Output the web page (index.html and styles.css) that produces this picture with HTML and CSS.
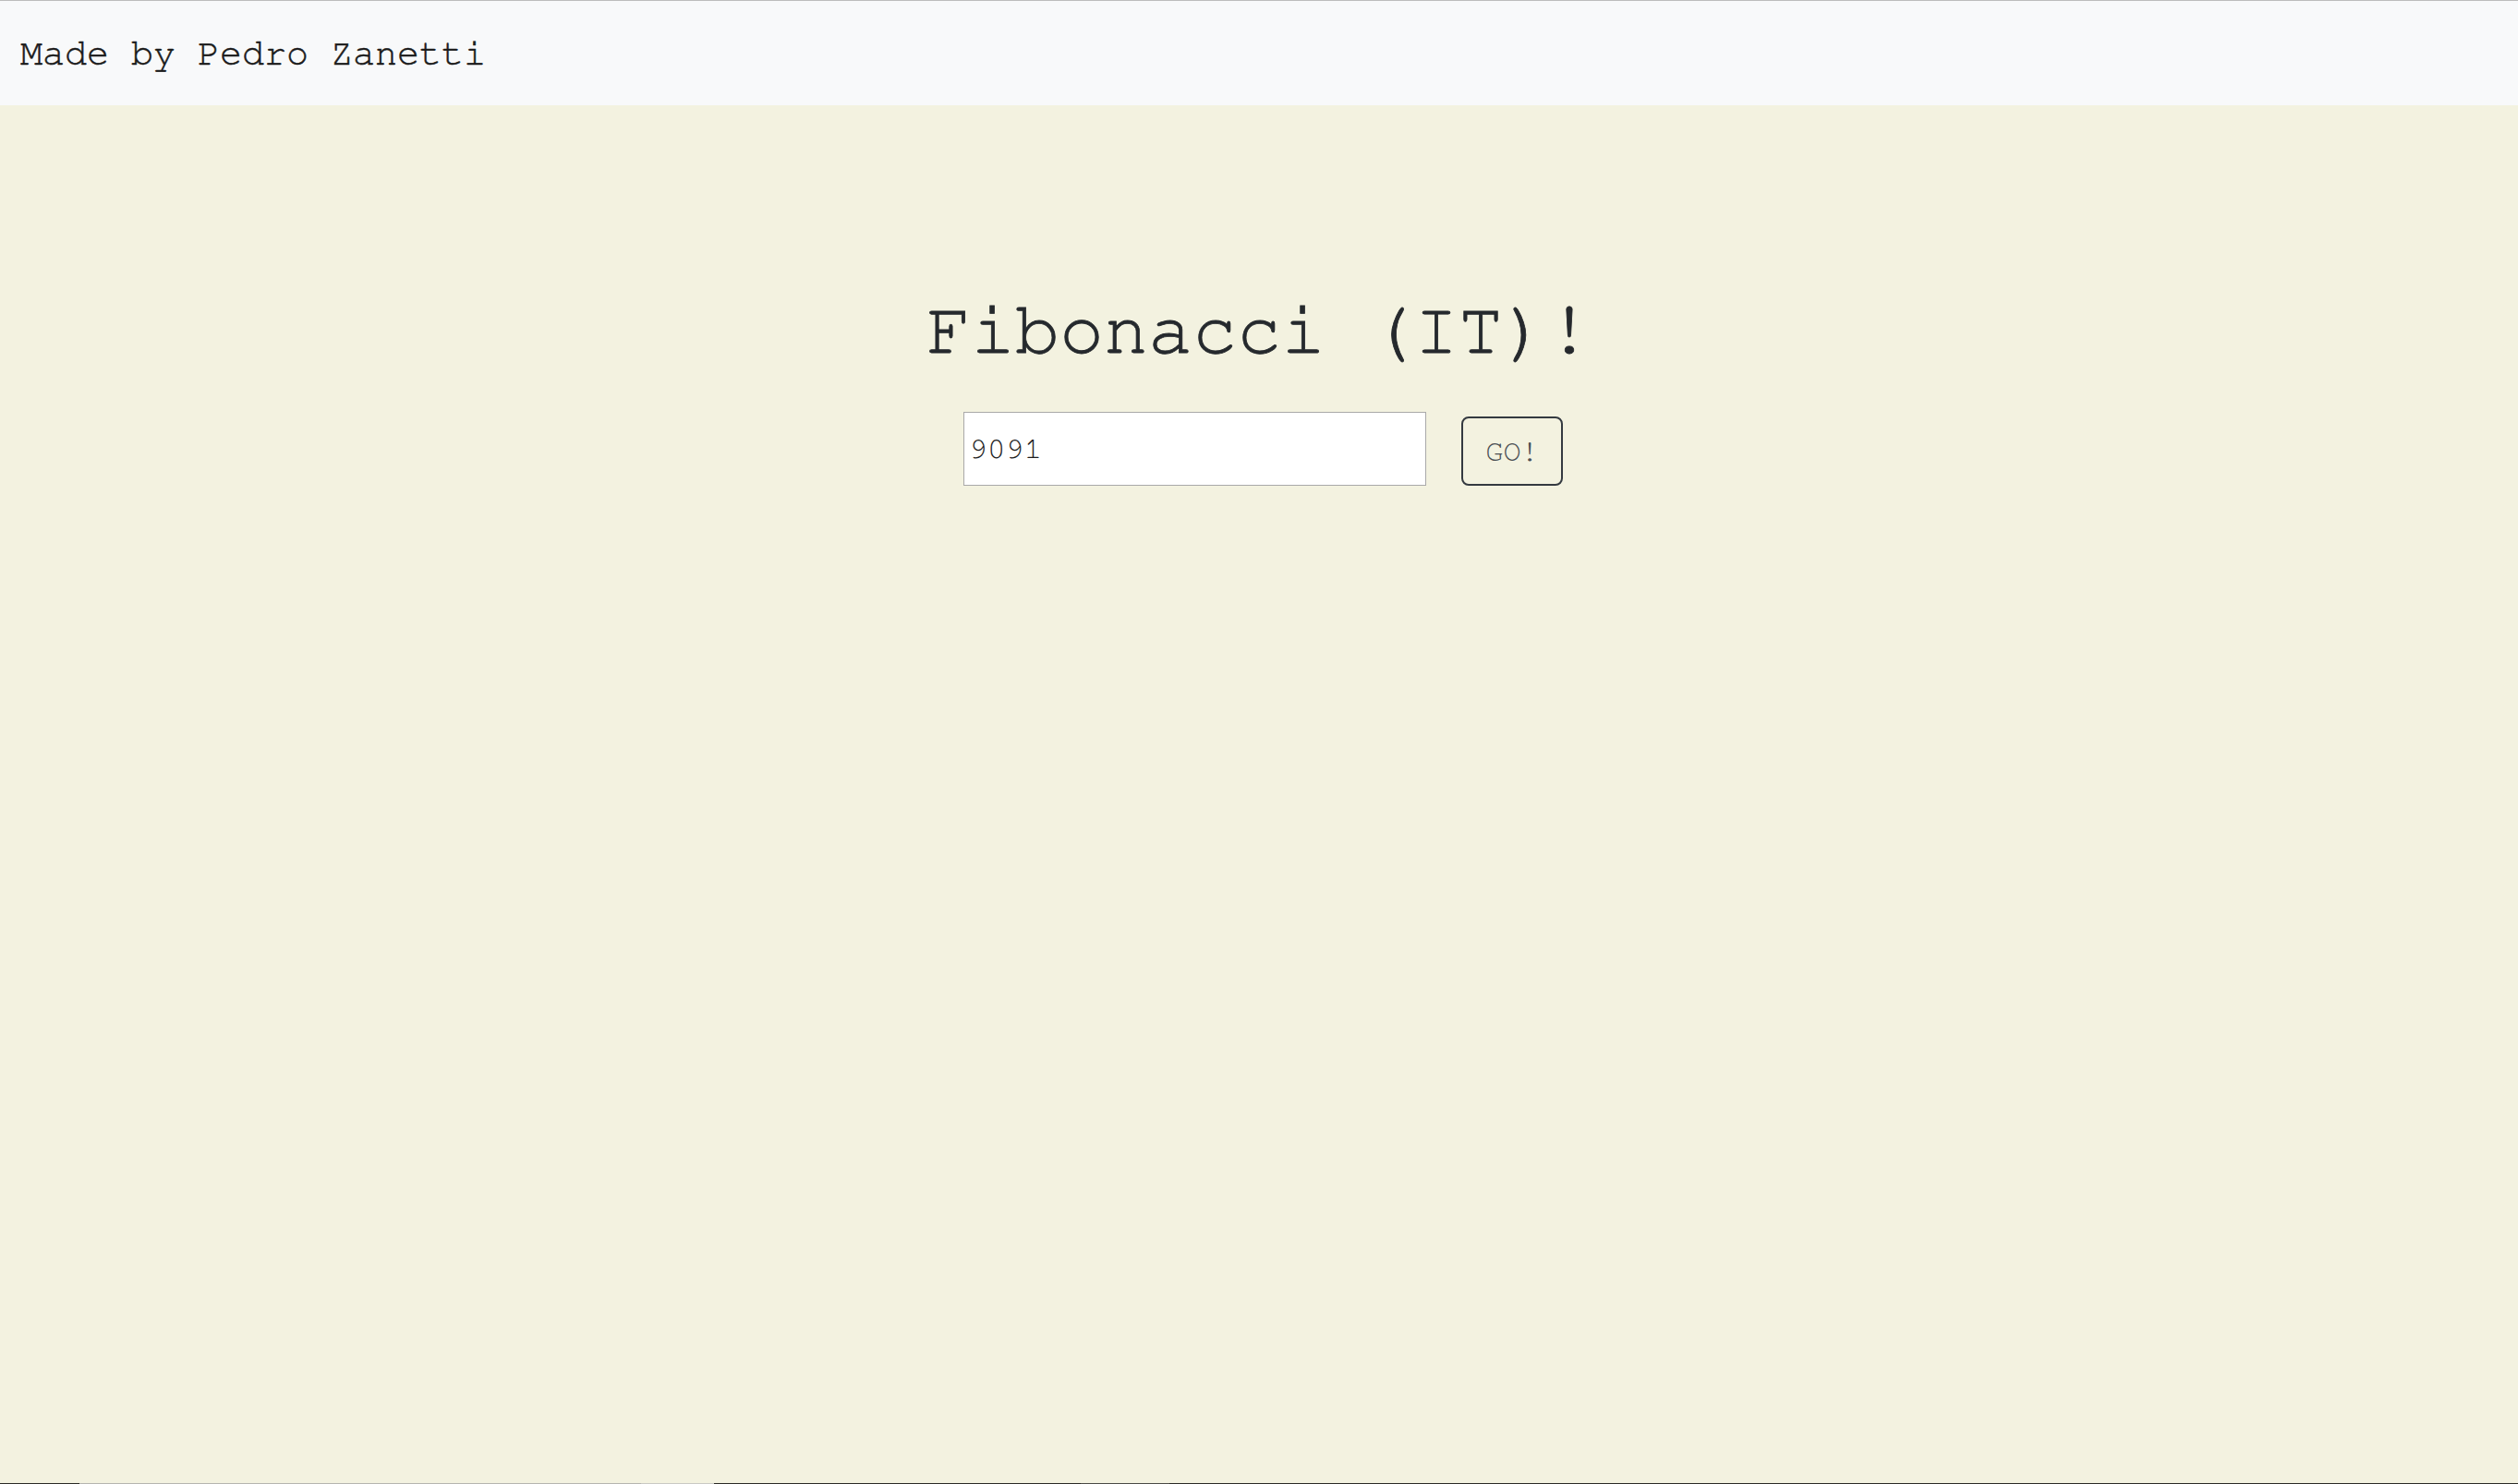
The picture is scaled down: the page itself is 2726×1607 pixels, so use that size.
FILE: index.html
```html
<!DOCTYPE html>
<html lang="en">
<head>
<meta charset="utf-8">
<title>Fibonacci (IT)!</title>
<link rel="stylesheet" href="styles.css">
</head>
<body>
<div class="page">
  <header class="topbar">
    <span class="credit">Made by Pedro Zanetti</span>
  </header>
  <main class="main">
    <h1 class="title">Fibonacci (IT)!</h1>
    <form class="fib-form">
      <input class="fib-input" type="text" value="9091">
      <button class="fib-btn" type="button">GO!</button>
    </form>
  </main>
  <div class="strip">
    <span class="seg seg-dark1"></span>
    <span class="seg seg-grey"></span>
    <span class="seg seg-light"></span>
    <span class="seg seg-dark2"></span>
    <span class="seg seg-mid"></span>
    <span class="seg seg-dark3"></span>
  </div>
</div>
</body>
</html>
```
FILE: styles.css
```css
html, body {
  margin: 0;
  padding: 0;
  height: 100%;
}
body {
  background: #f3f2e0;
  font-family: "Nimbus Mono PS", "Nimbus Mono L", "FreeMono", "Liberation Mono", monospace;
  color: #212529;
}
.page {
  display: flex;
  flex-direction: column;
  height: 100vh;
}
.topbar {
  border-top: 1px solid #bcbcbc;
  background: #f8f9fa;
  height: 113px;
  box-sizing: content-box;
  display: flex;
  align-items: center;
  padding: 0 22px;
}
.credit {
  font-size: 40px;
  color: #1a1a1a;
  line-height: 1.1328;
  padding-top: 3px;
  -webkit-text-stroke: 0.5px #1a1a1a;
}
.main {
  flex: 1;
  display: flex;
  flex-direction: column;
  align-items: center;
  padding-top: 204px;
}
.title {
  margin: 0;
  font-size: 80px;
  font-weight: normal;
  line-height: normal;
  color: #25292d;
  -webkit-text-stroke: 0.8px #25292d;
}
.fib-form {
  margin-top: 48px;
  display: flex;
  align-items: flex-end;
  gap: 38px;
  padding-left: 9px;
}
.fib-input {
  box-sizing: border-box;
  width: 501px;
  height: 80px;
  border: 1px solid #a9a9a9;
  background: #ffffff;
  padding: 0 5px;
  font-family: "Nimbus Mono PS", "Nimbus Mono L", "FreeMono", "Liberation Mono", monospace;
  font-size: 33px;
  color: #1e1e1e;
  outline: none;
}
.fib-btn {
  box-sizing: border-box;
  width: 110px;
  height: 75px;
  border: 2px solid #343a40;
  border-radius: 8px;
  background: transparent;
  font-family: "Nimbus Mono PS", "Nimbus Mono L", "FreeMono", "Liberation Mono", monospace;
  font-size: 32px;
  color: #4a4f54;
  padding: 0;
}
.strip {
  display: flex;
  height: 1px;
  flex: none;
}
.seg { display: block; height: 1px; }
.seg-dark1 { width: 86px; background: #2a2a26; }
.seg-grey { width: 608px; background: #b5b5b0; }
.seg-light { width: 79px; background: #c9c9c4; }
.seg-dark2 { width: 397px; background: #2a2a26; }
.seg-mid { width: 96px; background: #4a4a46; }
.seg-dark3 { flex: 1; background: #2a2a26; }
```
